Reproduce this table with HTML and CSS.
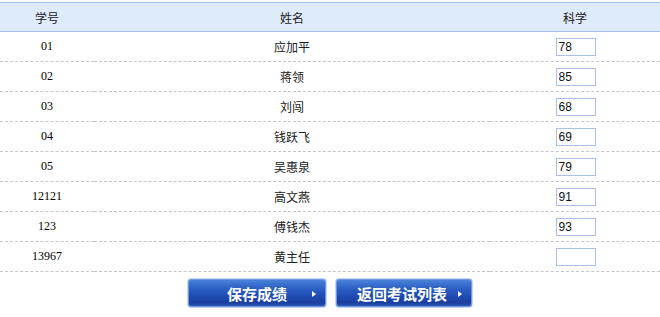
FILE: index.html
```html
<!DOCTYPE html>
<html lang="zh-CN">
<head>
<meta charset="utf-8">
<title>成绩录入</title>
<link rel="stylesheet" href="styles.css">
</head>
<body>
<table class="score-table">
  <thead>
    <tr><th class="col-id">学号</th><th class="col-name">姓名</th><th class="col-score">科学</th></tr>
  </thead>
  <tbody>
    <tr><td>01</td><td>应加平</td><td><input class="score-input" type="text" value="78"></td></tr>
    <tr><td>02</td><td>蒋领</td><td><input class="score-input" type="text" value="85"></td></tr>
    <tr><td>03</td><td>刘闯</td><td><input class="score-input" type="text" value="68"></td></tr>
    <tr><td>04</td><td>钱跃飞</td><td><input class="score-input" type="text" value="69"></td></tr>
    <tr><td>05</td><td>吴惠泉</td><td><input class="score-input" type="text" value="79"></td></tr>
    <tr><td>12121</td><td>高文燕</td><td><input class="score-input" type="text" value="91"></td></tr>
    <tr><td>123</td><td>傅钱杰</td><td><input class="score-input" type="text" value="93"></td></tr>
    <tr><td>13967</td><td>黄主任</td><td><input class="score-input" type="text" value=""></td></tr>
  </tbody>
</table>
<div class="actions">
  <button class="btn btn-save" type="button"><span class="btn-label">保存成绩</span><span class="btn-arrow"></span></button>
  <button class="btn btn-back" type="button"><span class="btn-label">返回考试列表</span><span class="btn-arrow"></span></button>
</div>
</body>
</html>
```
FILE: styles.css
```css
html, body {
  margin: 0;
  padding: 0;
  background: #fff;
}

body {
  font-family: "Noto Sans CJK SC", "DejaVu Sans", sans-serif;
  font-size: 12px;
  color: #222;
}

.score-table {
  width: 100%;
  margin-top: 2px;
  border-collapse: collapse;
}

.score-table th {
  height: 28px;
  padding: 0;
  font-weight: normal;
  background: #deebfb;
  border-top: 1px solid #a7c3ec;
  border-bottom: 1px solid #a7c3ec;
  text-align: center;
}

.col-id { width: 94px; }
.col-score { width: 170px; }

.score-table td {
  height: 29px;
  padding: 0;
  text-align: center;
  border-bottom: 1px dashed #c6c6c6;
}

.score-table td:first-child {
  font-family: "Liberation Serif", "DejaVu Serif", serif;
  font-size: 12px;
  color: #000;
}

.score-input {
  box-sizing: border-box;
  width: 40px;
  height: 18px;
  margin: 0 0 0 1px;
  padding: 1px 2px;
  border: 1px solid #a9c0e8;
  font-family: "Liberation Sans", Arial, sans-serif;
  font-size: 12px;
  color: #111;
  vertical-align: middle;
  outline: none;
}

.actions {
  display: flex;
  justify-content: center;
  gap: 8px;
  margin-top: 6px;
}

.btn {
  box-sizing: border-box;
  position: relative;
  height: 30px;
  padding: 0;
  border: 1px solid #c4d6f2;
  border-radius: 4px;
  background: linear-gradient(to bottom, #4d86dc 0%, #2f63c6 30%, #1f4cb3 60%, #1a3f9e 85%, #3563c0 100%);
  box-shadow: inset 0 0 0 1px #6e98df;
  color: #fff;
  font-family: "Noto Sans CJK SC", sans-serif;
  font-size: 15px;
  font-weight: bold;
  cursor: pointer;
}

.btn-save { width: 140px; }
.btn-back { width: 138px; }

.btn-back .btn-label { position: relative; left: -2px; }

.btn-arrow {
  position: absolute;
  top: 12px;
  right: 10px;
  width: 0;
  height: 0;
  border-top: 3.5px solid transparent;
  border-bottom: 3.5px solid transparent;
  border-left: 4px solid #fff;
}
```
